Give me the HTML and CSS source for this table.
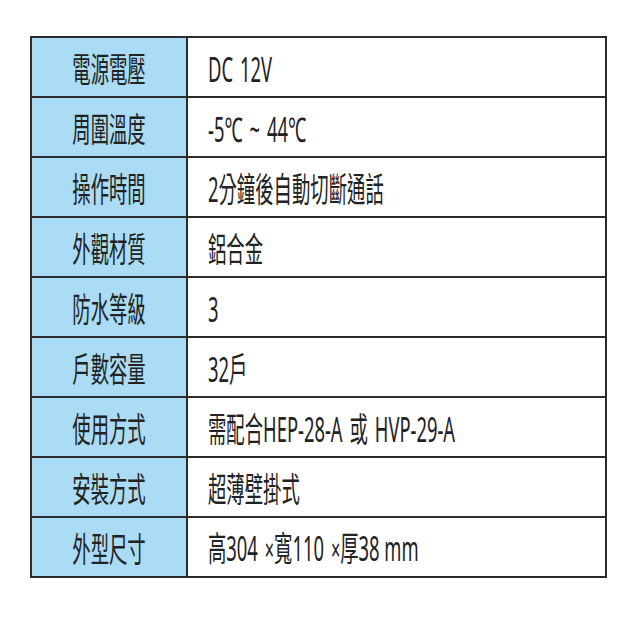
FILE: index.html
```html
<!DOCTYPE html>
<html lang="zh-Hant">
<head>
<meta charset="utf-8">
<link rel="stylesheet" href="styles.css">
</head>
<body>
<table class="spec">
  <tr><td class="label"><span class="t c">電源電壓</span></td><td class="value"><span class="t">DC 12V</span></td></tr>
  <tr><td class="label"><span class="t c">周圍溫度</span></td><td class="value"><span class="t">-5℃ ~ 44℃</span></td></tr>
  <tr><td class="label"><span class="t c">操作時間</span></td><td class="value"><span class="t">2分鐘後自動切斷通話</span></td></tr>
  <tr><td class="label"><span class="t c">外觀材質</span></td><td class="value"><span class="t">鋁合金</span></td></tr>
  <tr><td class="label"><span class="t c">防水等級</span></td><td class="value"><span class="t">3</span></td></tr>
  <tr><td class="label"><span class="t c">戶數容量</span></td><td class="value"><span class="t">32戶</span></td></tr>
  <tr><td class="label"><span class="t c">使用方式</span></td><td class="value"><span class="t">需配合HEP-28-A 或 HVP-29-A</span></td></tr>
  <tr><td class="label"><span class="t c">安裝方式</span></td><td class="value"><span class="t">超薄壁掛式</span></td></tr>
  <tr><td class="label"><span class="t c">外型尺寸</span></td><td class="value"><span class="t">高304 <span class="x">×</span>寬110 <span class="x">×</span>厚38<span class="sp"> </span>mm</span></td></tr>
</table>
</body>
</html>
```
FILE: styles.css
```css
html, body {
  margin: 0;
  padding: 0;
  background: #ffffff;
}
body {
  padding: 36px 0 0 30px;
  font-family: "Noto Sans", "Noto Sans CJK TC", sans-serif;
  color: #222222;
}
.spec {
  border-collapse: collapse;
  table-layout: fixed;
  width: 577px;
}
.spec td {
  border: 2px solid #2b2b2b;
  height: 58px;
  padding: 0;
  overflow: hidden;
  white-space: nowrap;
  vertical-align: middle;
}
.label {
  width: 154px;
  background: #aadcf5;
  text-align: center;
}
.value {
  padding-left: 20px !important;
  text-align: left;
}
.t {
  display: inline-block;
  font-size: 34px;
  line-height: 40px;
  word-spacing: 4px;
  transform: scaleX(0.54);
  transform-origin: left center;
  position: relative;
  top: 2px;
}
.t.c {
  transform-origin: center center;
}
.x {
  font-size: 30px;
}
.sp {
  word-spacing: 0;
}
```
